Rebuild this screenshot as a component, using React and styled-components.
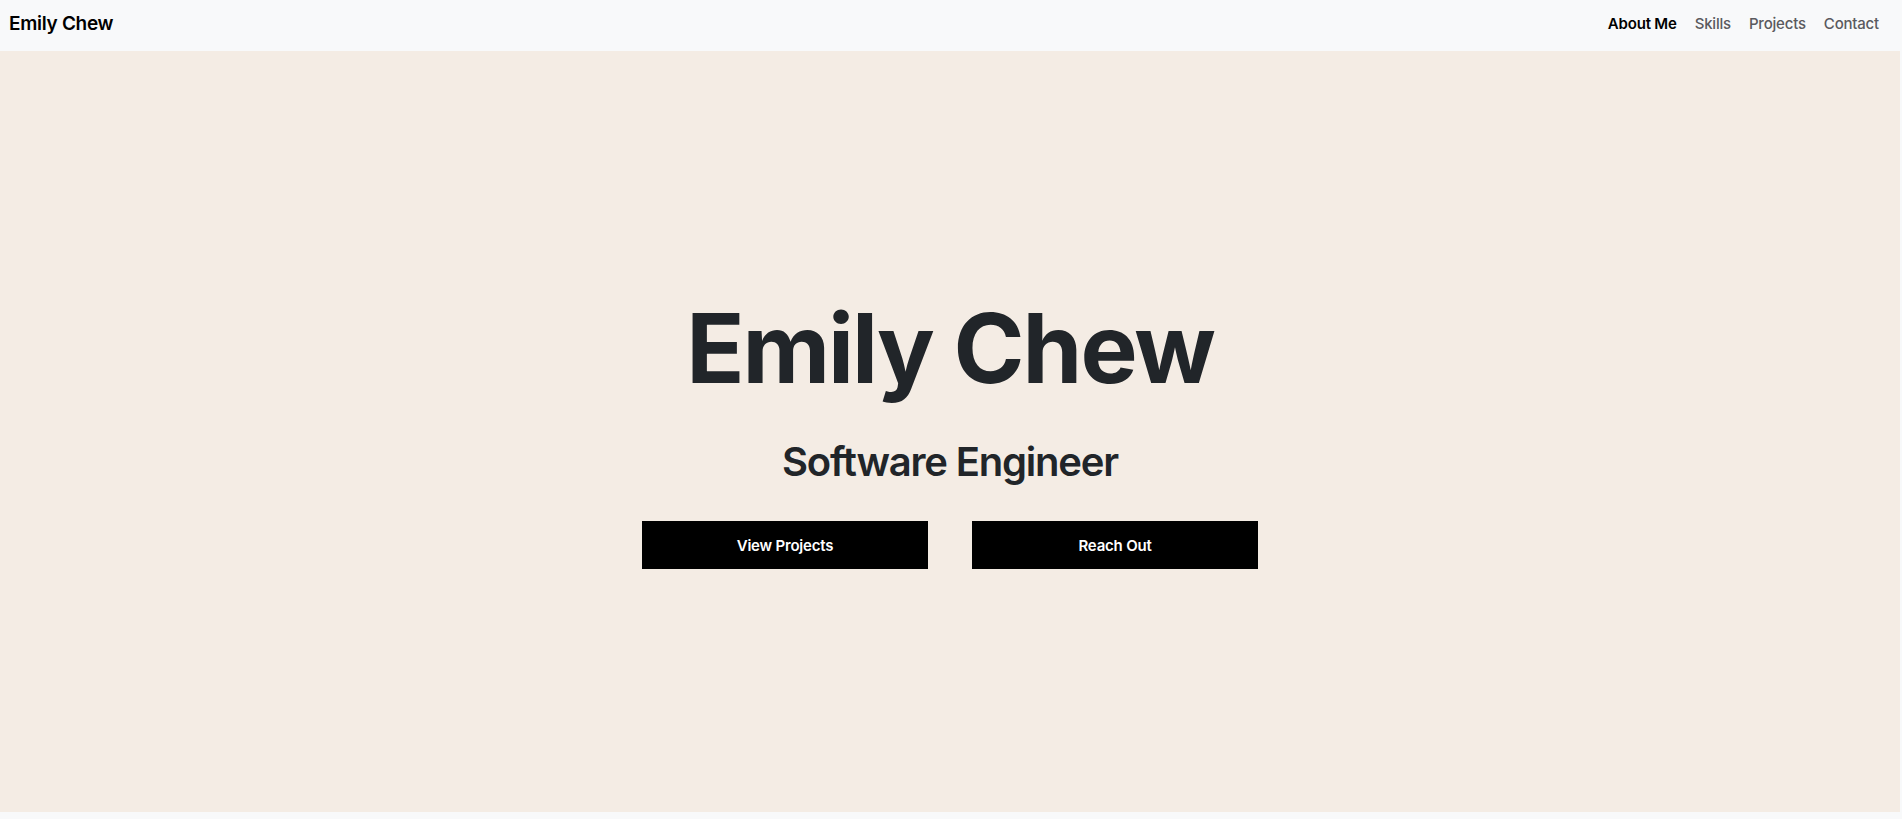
import React from 'react'
import styled, { createGlobalStyle } from 'styled-components'

const GlobalStyle = createGlobalStyle`
  body {
    margin: 0;
    background: #f8f9fa;
    font-family: Inter, "Noto Sans", sans-serif;
    color: #212529;
  }
`

const Page = styled.div`
  display: flex;
  flex-direction: column;
  margin-right: 2px;
`

const Navbar = styled.nav`
  height: 51px;
  display: flex;
  align-items: center;
  justify-content: space-between;
  padding: 0 12px 4px 9px;
  box-sizing: border-box;
  background: #f8f9fa;
`

const Brand = styled.a`
  font-size: 19px;
  font-weight: 600;
  color: #000;
  text-decoration: none;
  letter-spacing: -0.3px;
`

const Links = styled.ul`
  display: flex;
  list-style: none;
  margin: 0;
  padding: 0;
`

const NavLink = styled.a`
  display: block;
  padding: 8px 9px;
  font-size: 15px;
  font-weight: ${p => (p.$active ? 600 : 550)};
  color: ${p => (p.$active ? '#000' : '#5a5a5e')};
  text-decoration: none;
  letter-spacing: -0.2px;
`

const Hero = styled.section`
  height: 761px;
  background: #f4ece4;
  display: flex;
  flex-direction: column;
  align-items: center;
  justify-content: center;
  padding-bottom: 3px;
  box-sizing: border-box;
`

const Title = styled.h1`
  margin: 0;
  font-size: 96px;
  font-weight: 700;
  line-height: 1.2;
  letter-spacing: -2px;
`

const Subtitle = styled.h2`
  margin: 32px 0 0;
  font-size: 40px;
  font-weight: 600;
  line-height: 1.2;
  letter-spacing: -1.2px;
`

const Actions = styled.div`
  display: flex;
  gap: 44px;
  margin-top: 35px;
`

const Button = styled.a`
  width: 286px;
  height: 48px;
  display: flex;
  align-items: center;
  justify-content: center;
  background: #000;
  color: #fff;
  font-size: 15px;
  font-weight: 600;
  text-decoration: none;
  letter-spacing: -0.2px;
`

const Strip = styled.div`
  height: 7px;
  background: #f8f9fa;
`

const links = ['About Me', 'Skills', 'Projects', 'Contact']

export default function App() {
  return (
    <Page>
      <GlobalStyle />
      <Navbar>
        <Brand href="#">Emily Chew</Brand>
        <Links>
          {links.map((l, i) => (
            <li key={l}>
              <NavLink href="#" $active={i === 0}>{l}</NavLink>
            </li>
          ))}
        </Links>
      </Navbar>
      <Hero>
        <Title>Emily Chew</Title>
        <Subtitle>Software Engineer</Subtitle>
        <Actions>
          <Button href="#">View Projects</Button>
          <Button href="#">Reach Out</Button>
        </Actions>
      </Hero>
      <Strip />
    </Page>
  )
}
